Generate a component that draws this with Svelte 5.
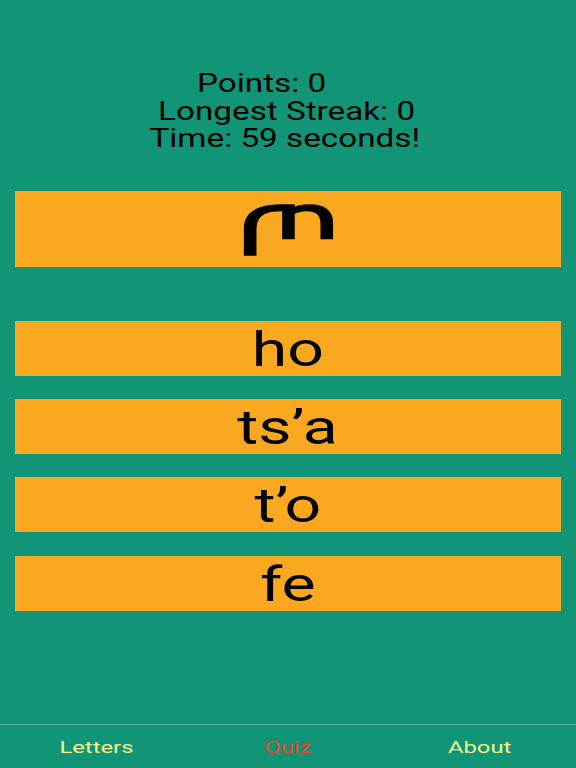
<script>
  let points = 0;
  let streak = 0;
  let time = 59;
  const letter = 'ጦ';
  const answers = ['ho', 'ts’a', 't’o', 'fe'];
  const tabs = ['Letters', 'Quiz', 'About'];
  let active = 'Quiz';
</script>

<div class="screen">
  <div class="stats">
    <p class="points"><span>Points: {points}</span></p>
    <p class="streak"><span>Longest Streak: {streak}</span></p>
    <p class="time"><span>Time: {time} seconds!</span></p>
  </div>

  <div class="letter"><span>{letter}</span></div>

  <div class="answers">
    {#each answers as answer}
      <button class="answer"><span>{answer}</span></button>
    {/each}
  </div>

  <nav class="tabs">
    {#each tabs as tab}
      <div class="tab" class:active={tab === active}><span>{tab}</span></div>
    {/each}
  </nav>
</div>

<style>
  :global(body) {
    margin: 0;
    background: #129577;
  }

  .screen {
    height: 768px;
    display: flex;
    flex-direction: column;
    background: #129577;
    font-family: Roboto, "Noto Sans", sans-serif;
    color: #000;
  }

  .stats {
    flex: none;
    padding-top: 70px;
    height: 191px;
    box-sizing: border-box;
    font-size: 25px;
    line-height: 27.5px;
    text-align: center;
  }

  .stats p {
    margin: 0;
  }

  .stats span,
  .answer span,
  .tab span,
  .letter span {
    display: inline-block;
    transform: scaleX(1.33);
  }

  .points { margin-right: 53px !important; }
  .streak { margin-right: 2px !important; }
  .time { margin-right: 6px !important; }

  .letter {
    flex: none;
    margin: 0 15px;
    height: 75.5px;
    background: #fba821;
    font-family: "Noto Sans Ethiopic", "Noto Sans", sans-serif;
    font-size: 70px;
    line-height: 75px;
    text-align: center;
    -webkit-text-stroke: 1.5px #000;
  }

  .letter span {
    transform: scaleX(1.6);
  }

  .answers {
    flex: none;
    margin-top: 54.5px;
    display: flex;
    flex-direction: column;
    gap: 23.2px;
    padding: 0 15px;
  }

  .answer {
    display: block;
    height: 55px;
    padding: 0;
    border: 0;
    border-radius: 0;
    background: #fba821;
    color: #000;
    font-family: Roboto, "Liberation Sans", sans-serif;
    font-size: 48px;
    line-height: 57px;
    text-align: center;
  }

  .answer span {
    transform: scaleX(1.34);
  }

  .tabs {
    margin-top: auto;
    height: 43px;
    display: flex;
    border-top: 1px solid #5fb7a2;
  }

  .tab {
    flex: 1;
    text-align: center;
    font-size: 17px;
    line-height: 44px;
    color: #f3f58f;
  }

  .tab span {
    transform: scaleX(1.4);
  }

  .tab.active {
    color: #e2492f;
  }
</style>
